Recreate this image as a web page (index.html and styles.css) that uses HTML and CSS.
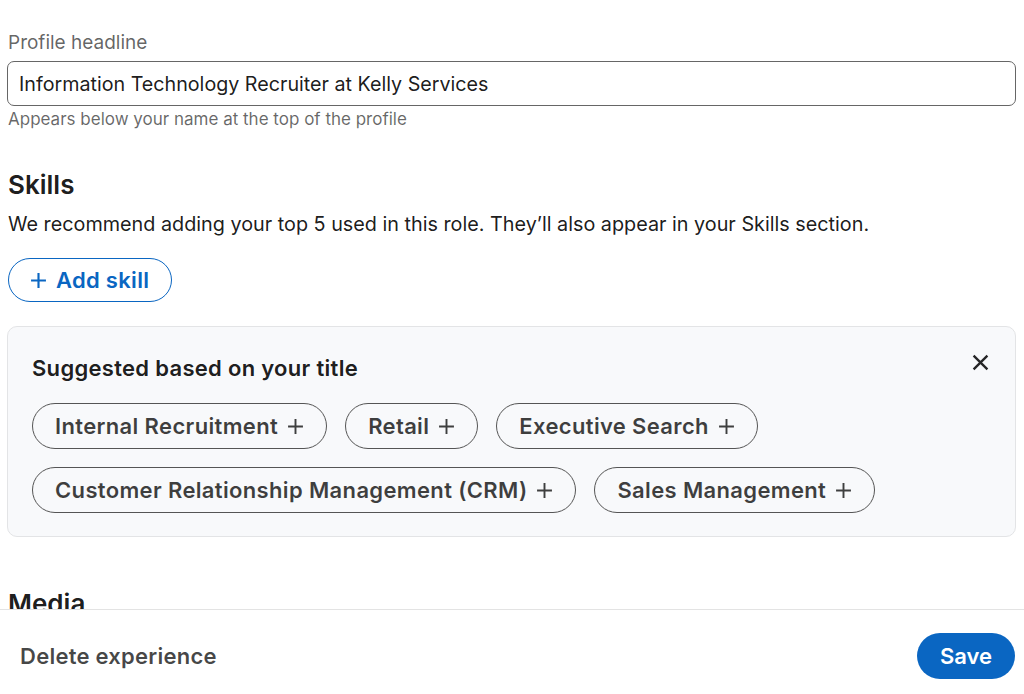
FILE: index.html
```html
<!DOCTYPE html>
<html lang="en">
<head>
    <meta charset="UTF-8">
    <meta name="viewport" content="width=device-width, initial-scale=1.0">
    <title>Edit experience</title>
    <link rel="stylesheet" href="styles.css">
</head>
<body>
    <div class="modal">
        <div class="modal-body">
            <div class="field">
                <label class="field-label" for="headline">Profile headline</label>
                <input class="field-input" type="text" id="headline" value="Information Technology Recruiter at Kelly Services">
                <p class="field-hint">Appears below your name at the top of the profile</p>
            </div>

            <section class="skills">
                <h2 class="section-title">Skills</h2>
                <p class="section-desc">We recommend adding your top 5 used in this role. They’ll also appear in your Skills section.</p>
                <button class="add-skill">
                    <svg class="plus-icon" viewBox="0 0 16 16" width="17" height="17"><path d="M8 1v14M1 8h14" stroke="currentColor" stroke-width="2" fill="none"/></svg>
                    Add skill
                </button>

                <div class="suggest-card">
                    <div class="suggest-head">
                        <h3 class="suggest-title">Suggested based on your title</h3>
                        <button class="close-btn" aria-label="Dismiss">
                            <svg viewBox="0 0 16 16" width="17" height="17"><path d="M1.5 1.5l13 13M14.5 1.5l-13 13" stroke="currentColor" stroke-width="2.2" fill="none"/></svg>
                        </button>
                    </div>
                    <div class="pill-list">
                        <button class="pill">Internal Recruitment <svg viewBox="0 0 16 16" width="17" height="17"><path d="M8 1v14M1 8h14" stroke="currentColor" stroke-width="1.8" fill="none"/></svg></button>
                        <button class="pill">Retail <svg viewBox="0 0 16 16" width="17" height="17"><path d="M8 1v14M1 8h14" stroke="currentColor" stroke-width="1.8" fill="none"/></svg></button>
                        <button class="pill">Executive Search <svg viewBox="0 0 16 16" width="17" height="17"><path d="M8 1v14M1 8h14" stroke="currentColor" stroke-width="1.8" fill="none"/></svg></button>
                        <button class="pill">Customer Relationship Management (CRM) <svg viewBox="0 0 16 16" width="17" height="17"><path d="M8 1v14M1 8h14" stroke="currentColor" stroke-width="1.8" fill="none"/></svg></button>
                        <button class="pill">Sales Management <svg viewBox="0 0 16 16" width="17" height="17"><path d="M8 1v14M1 8h14" stroke="currentColor" stroke-width="1.8" fill="none"/></svg></button>
                    </div>
                </div>
            </section>

            <section class="media">
                <h2 class="section-title">Media</h2>
            </section>
        </div>

        <footer class="modal-footer">
            <button class="delete-btn">Delete experience</button>
            <button class="save-btn">Save</button>
        </footer>
    </div>
</body>
</html>
```

FILE: styles.css
```css
* {
    box-sizing: border-box;
}

body {
    margin: 0;
    background: #fff;
    color: rgba(0, 0, 0, 0.9);
    font-family: Inter, "Liberation Sans", Arial, sans-serif;
}

button {
    font-family: inherit;
    cursor: pointer;
}

.modal {
    height: 694px;
    display: flex;
    flex-direction: column;
}

.modal-body {
    flex: 1;
    overflow: hidden;
    padding: 31px 8px 0 7px;
}

/* Headline field */
.field-label {
    display: block;
    font-size: 19px;
    line-height: 24px;
    color: rgba(0, 0, 0, 0.62);
    margin-left: 1px;
    margin-bottom: 6px;
}

.field-input {
    display: block;
    width: 100%;
    height: 45px;
    border: 1px solid #666;
    border-radius: 7px;
    padding: 0 11px;
    font-family: inherit;
    font-size: 19.7px;
    color: rgba(0, 0, 0, 0.9);
    background: #fff;
}

.field-hint {
    margin: 3px 0 0 1px;
    font-size: 17px;
    line-height: 20px;
    color: rgba(0, 0, 0, 0.6);
}

/* Skills */
.skills {
    margin-top: 40px;
}

.section-title {
    margin: 0 0 0 1px;
    font-size: 26px;
    line-height: 32px;
    font-weight: 600;
    color: rgba(0, 0, 0, 0.9);
}

.section-desc {
    margin: 11px 0 0 1px;
    font-size: 19.8px;
    line-height: 24px;
}

.add-skill {
    display: inline-flex;
    align-items: center;
    gap: 9px;
    margin: 22px 0 0 1px;
    height: 44px;
    padding: 0 22px 0 21px;
    border: 1.5px solid #0a66c2;
    border-radius: 22px;
    background: #fff;
    color: #0a66c2;
    font-size: 22px;
    font-weight: 600;
    letter-spacing: 0.3px;
}

.suggest-card {
    margin-top: 24px;
    background: #f8f9fb;
    border: 1px solid #e3e4e6;
    border-radius: 10px;
    padding: 27px 24px 23px;
}

.suggest-head {
    display: flex;
    justify-content: space-between;
    align-items: flex-start;
}

.suggest-title {
    margin: 0;
    font-size: 22px;
    line-height: 28px;
    font-weight: 600;
    letter-spacing: 0.3px;
}

.close-btn {
    border: none;
    background: none;
    padding: 0;
    margin: 0 2px 0 0;
    color: rgba(0, 0, 0, 0.85);
    display: flex;
}

.pill-list {
    margin-top: 21px;
    display: flex;
    flex-wrap: wrap;
    gap: 18px;
}

.pill {
    display: inline-flex;
    align-items: center;
    gap: 9px;
    height: 46px;
    padding: 0 22px;
    border: 1px solid #555;
    border-radius: 23px;
    background: transparent;
    color: rgba(0, 0, 0, 0.75);
    font-size: 22px;
    font-weight: 600;
    letter-spacing: 0.35px;
}

/* Media (partly hidden under footer) */
.media {
    margin-top: 51px;
}

/* Footer */
.modal-footer {
    height: 85px;
    border-top: 1px solid #e3e3e3;
    display: flex;
    justify-content: space-between;
    align-items: center;
    padding: 8px 9px 0 20px;
    background: #fff;
}

.delete-btn {
    border: none;
    background: none;
    padding: 0;
    font-size: 22px;
    font-weight: 600;
    letter-spacing: 0.25px;
    color: rgba(0, 0, 0, 0.72);
}

.save-btn {
    height: 46px;
    padding: 0 23px;
    border: none;
    border-radius: 23px;
    background: #0a66c2;
    color: #fff;
    font-size: 22px;
    font-weight: 600;
}
```
